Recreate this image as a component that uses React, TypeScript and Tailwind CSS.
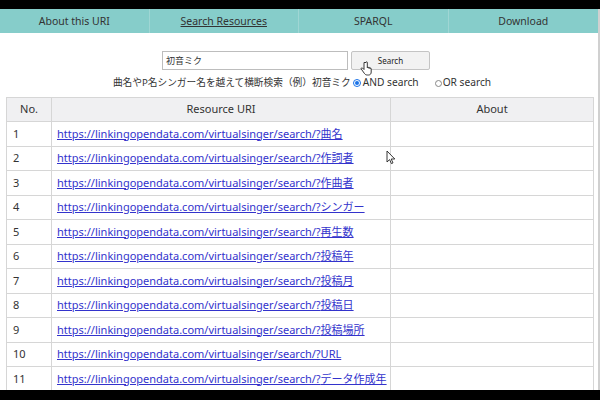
import React from "react";

const rows = [
  "曲名",
  "作詞者",
  "作曲者",
  "シンガー",
  "再生数",
  "投稿年",
  "投稿月",
  "投稿日",
  "投稿場所",
  "URL",
  "データ作成年",
];

const font = { fontFamily: '"Noto Sans", "Noto Sans CJK JP", sans-serif' };

export default function App() {
  return (
    <div className="w-[600px] h-[400px] bg-black flex flex-col overflow-hidden" style={font}>
      <div className="h-[9px] shrink-0" />
      <div className="h-[381px] shrink-0 bg-white flex flex-col overflow-hidden relative border-r-2 border-[#d0d0d0]">
        <nav className="h-[24px] shrink-0 bg-[#86cdca] grid grid-cols-4 text-[10.5px] text-[#333]">
          <div className="flex items-center justify-center pt-[1px] border-r border-[#9fd6d4]">About this URI</div>
          <div className="flex items-center justify-center pt-[1px] border-r border-[#9fd6d4]">
            <span className="underline">Search Resources</span>
          </div>
          <div className="flex items-center justify-center pt-[1px] border-r border-[#9fd6d4]">SPARQL</div>
          <div className="flex items-center justify-center pt-[1px]">Download</div>
        </nav>
        <div className="flex flex-col items-center pt-[18px]">
          <div className="flex items-center gap-[3px] pr-[6px]">
            <div className="w-[186px] h-[19px] border border-[#bdbdbd] flex items-center px-[3px] text-[9px] text-[#333]">
              初音ミク
            </div>
            <div className="w-[79px] h-[19px] border border-[#c4c4c4] bg-[#f2f2f2] rounded-[2px] flex items-center justify-center text-[8px] text-[#222]">
              Search
            </div>
          </div>
          <div className="flex items-center h-[14px] mt-[6px] text-[10.2px] text-[#333] pl-[6px]">
            <span className="text-[9.7px]">曲名やP名シンガー名を越えて横断検索（例）初音ミク</span>
            <span className="ml-[2px] w-[8px] h-[8px] rounded-full border border-[#1a73e8] flex items-center justify-center">
              <span className="w-[4px] h-[4px] rounded-full bg-[#1a73e8]" />
            </span>
            <span className="ml-[2px]">AND search</span>
            <span className="ml-[16px] w-[7px] h-[7px] rounded-full border border-[#888]" />
            <span className="ml-[1px]">OR search</span>
          </div>
        </div>
        <div className="px-[6px] mt-[7px]">
          <table className="w-[588px] border-collapse text-[11px] text-[#333] table-fixed">
            <thead>
              <tr className="h-[24px] bg-[#f0f0f2]">
                <th className="w-[45px] border border-[#d6d6d6] font-normal">No.</th>
                <th className="w-[339px] border border-[#d6d6d6] font-normal">Resource URI</th>
                <th className="border border-[#d6d6d6] font-normal">About</th>
              </tr>
            </thead>
            <tbody>
              {rows.map((r, i) => (
                <tr key={i} className="h-[24.5px]">
                  <td className="border border-[#d6d6d6] pl-[6px]">{i + 1}</td>
                  <td className="border border-[#d6d6d6] pl-[5px] whitespace-nowrap">
                    <a className="text-[#3333cc] underline" href="#">
                      https://linkingopendata.com/virtualsinger/search/?{r}
                    </a>
                  </td>
                  <td className="border border-[#d6d6d6]" />
                </tr>
              ))}
            </tbody>
          </table>
        </div>
        <svg className="absolute left-[360px] top-[52px]" width="12" height="16" viewBox="0 0 12 16">
          <path d="M4 1.5v7l-1.5-1.5c-.8-.6-1.8.3-1.2 1.1l3 4.2c.6.9 1.4 1.7 3 1.7h1.2c1.8 0 2.7-1.2 2.7-3v-3.2c0-1-1.3-1-1.3 0v-.6c0-1-1.3-1-1.3 0v-.4c0-1-1.3-1-1.3 0v-5.3c0-1-1.3-1-1.3 0z" fill="#fff" stroke="#222" strokeWidth="0.9" />
        </svg>
        <svg className="absolute left-[386px] top-[141px]" width="10" height="15" viewBox="0 0 10 15">
          <path d="M1 1v11l2.6-2.4 1.8 4 1.6-.7-1.8-3.9h3.6z" fill="#fff" stroke="#222" strokeWidth="0.9" />
        </svg>
      </div>
    </div>
  );
}
